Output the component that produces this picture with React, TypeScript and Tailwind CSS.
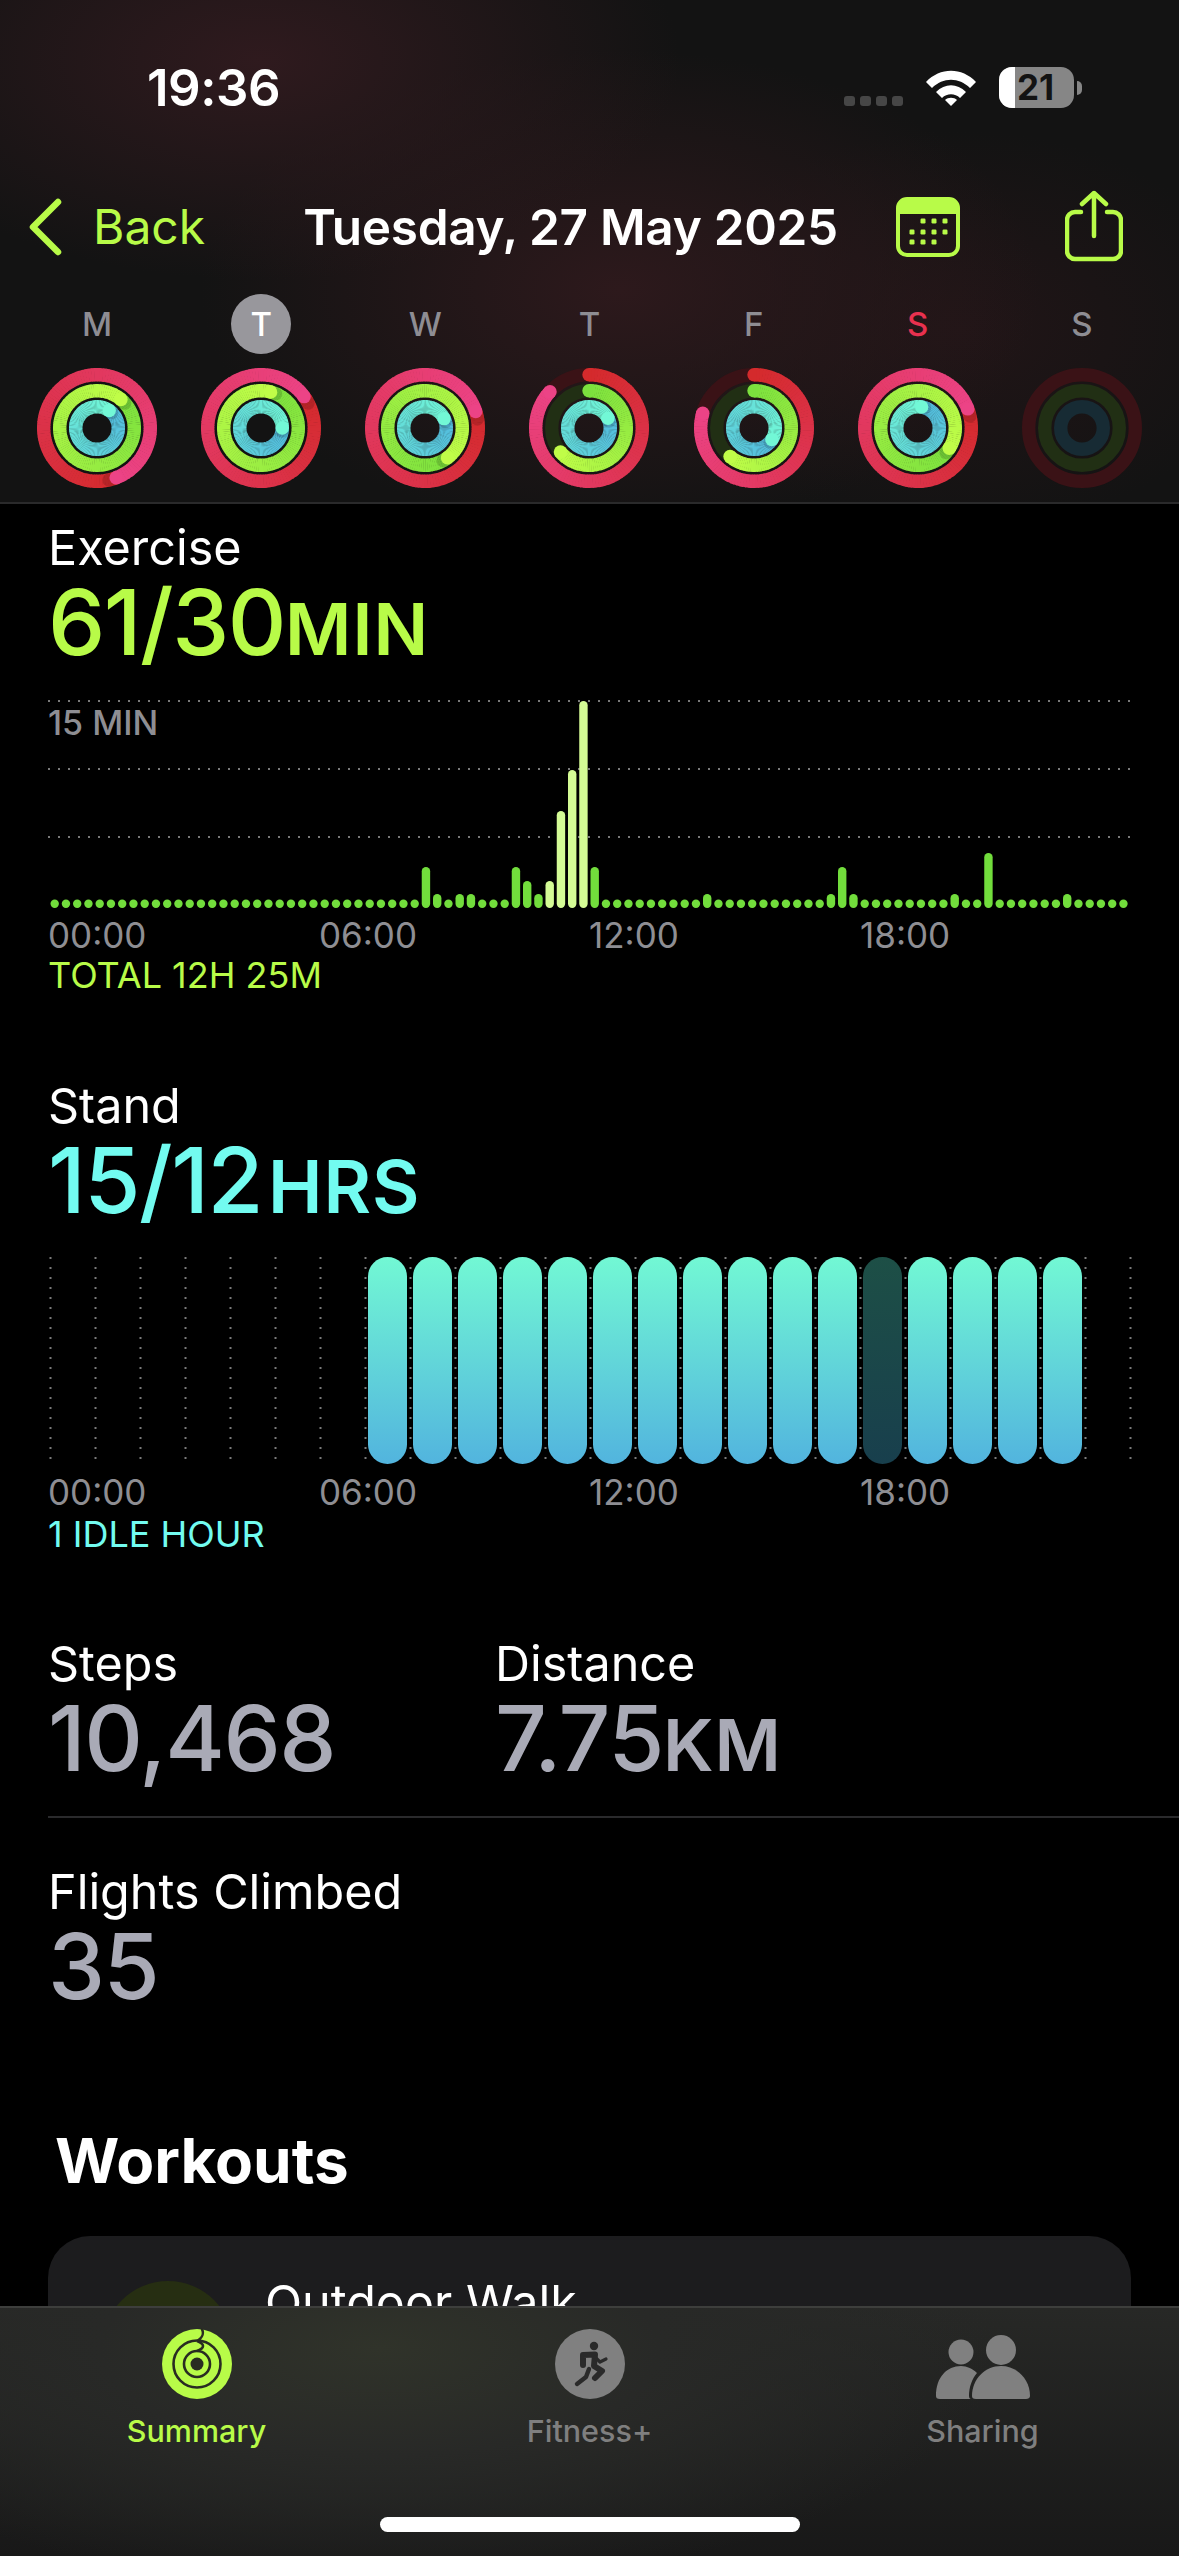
import React from 'react';

type RingSpec = { end: number; full: boolean };
type DayRings = { label: string; labelClass?: string; selected?: boolean; rings: (RingSpec | null)[] };

const RING_STYLES = [
  { r: 53.3, track: '#3a1216', from: [212, 42, 44], to: [236, 67, 134] },
  { r: 37.3, track: '#212f14', from: [124, 225, 62], to: [192, 253, 72] },
  { r: 21.3, track: '#172b34', from: [82, 186, 222], to: [114, 248, 214] },
];

const DAYS: DayRings[] = [
  { label: 'M', rings: [{ end: 159, full: true }, { end: 40, full: true }, { end: 35, full: true }] },
  { label: 'T', selected: true, rings: [{ end: 54, full: true }, { end: 15, full: true }, { end: 90, full: true }] },
  { label: 'W', rings: [{ end: 72, full: true }, { end: 143, full: true }, { end: 64, full: true }] },
  { label: 'T', rings: [{ end: 313, full: false }, { end: 230, full: false }, { end: 63, full: true }] },
  { label: 'F', rings: [{ end: 286, full: false }, { end: 220, full: false }, { end: 123, full: true }] },
  { label: 'S', labelClass: 'text-[#e8314f]', rings: [{ end: 69, full: true }, { end: 123, full: true }, { end: 10, full: true }] },
  { label: 'S', rings: [null, null, null] },
];

// quarter hours with more than the resting dot
const EXERCISE_BARS: Record<number, number> = {
  33: 41, 34: 14, 36: 14, 37: 14, 41: 41, 42: 27, 43: 14, 44: 27, 45: 97, 46: 138, 47: 207, 48: 41,
  58: 14, 69: 14, 70: 41, 71: 14, 80: 14, 83: 55, 90: 14,
};
const EXERCISE_LIGHT = [44, 45, 46, 47];
const STAND_HOURS = Array.from({ length: 16 }, (_, i) => i);
const TIME_LABELS = ['00:00', '06:00', '12:00', '18:00'];

const polar = (r: number, deg: number) => {
  const a = ((deg - 90) * Math.PI) / 180;
  return { x: 60 + r * Math.cos(a), y: 60 + r * Math.sin(a) };
};

const mix = (a: number[], b: number[], t: number) =>
  `rgb(${a.map((v, i) => Math.round(v + (b[i] - v) * t)).join(',')})`;

const Ring: React.FC<{ spec: RingSpec | null; index: number }> = ({ spec, index }) => {
  const s = RING_STYLES[index];
  const width = 13.4;
  if (!spec) return <circle cx="60" cy="60" r={s.r} fill="none" stroke={s.track} strokeWidth={width} />;

  const start = spec.full ? spec.end : 0;
  const sweep = spec.full ? 360 : spec.end;
  const steps = Math.ceil(sweep / 3);
  const segments = Array.from({ length: steps }, (_, i) => {
    const a0 = start + (sweep * i) / steps;
    const a1 = start + (sweep * (i + 1)) / steps + 0.6;
    const p0 = polar(s.r, a0);
    const p1 = polar(s.r, a1);
    return (
      <path
        key={i}
        d={`M ${p0.x} ${p0.y} A ${s.r} ${s.r} 0 0 1 ${p1.x} ${p1.y}`}
        fill="none"
        stroke={mix(s.from, s.to, i / steps)}
        strokeWidth={width}
      />
    );
  });
  const cap = polar(s.r, spec.end);
  const shadow = polar(s.r, spec.end + 8);
  const first = polar(s.r, 0);

  return (
    <g>
      {!spec.full && <circle cx="60" cy="60" r={s.r} fill="none" stroke={s.track} strokeWidth={width} />}
      {!spec.full && <circle cx={first.x} cy={first.y} r={width / 2} fill={mix(s.from, s.to, 0)} />}
      {segments}
      {spec.full && <circle cx={shadow.x} cy={shadow.y} r={width / 2} fill="#000" opacity="0.15" />}
      <circle cx={cap.x} cy={cap.y} r={width / 2} fill={mix(s.from, s.to, 1)} />
    </g>
  );
};

const ActivityRings: React.FC<{ rings: (RingSpec | null)[] }> = ({ rings }) => (
  <svg width="120" height="120" viewBox="0 0 120 120">
    {rings.map((spec, i) => (
      <Ring key={i} spec={spec} index={i} />
    ))}
  </svg>
);

const Metric: React.FC<{ title: string; value: string; unit?: string; unitClass?: string; color: string }> = ({
  title,
  value,
  unit,
  unitClass = 'text-[72px]',
  color,
}) => (
  <div className="py-[4px]">
    <div className="text-[48.5px] leading-[50px] text-white">{title}</div>
    <div className={`mt-[11px] flex items-baseline leading-[76px] ${color}`}>
      <span className="text-[91px] font-medium tracking-[-1.5px]">{value}</span>
      {unit && <span className={`font-semibold tracking-[1px] ${unitClass}`}>{unit}</span>}
    </div>
  </div>
);

const TimeAxis: React.FC = () => (
  <div className="relative h-[38px] text-[35px] leading-[38px] text-[#8e8e93]">
    {TIME_LABELS.map((t, i) => (
      <span key={t} className={['absolute left-0', 'absolute left-[271px]', 'absolute left-[541px]', 'absolute left-[812px]'][i]}>
        {t}
      </span>
    ))}
  </div>
);

const ExerciseChart: React.FC = () => (
  <svg width="1179" height="216" viewBox="0 0 1179 216" className="-ml-[48px] block">
    {[2, 70, 138].map((y) => (
      <line key={y} x1="48" x2="1132" y1={y} y2={y} stroke="#7a7a7a" strokeWidth="2" strokeDasharray="2 8" />
    ))}
    {Array.from({ length: 96 }, (_, i) => {
      const h = EXERCISE_BARS[i] ?? 8.4;
      const light = EXERCISE_LIGHT.includes(i);
      return (
        <rect
          key={i}
          x={54.7 + i * 11.25 - 4.2}
          y={209 - h}
          width="8.4"
          height={h}
          rx="4.2"
          fill={light ? '#d4fb95' : '#72dd3c'}
        />
      );
    })}
  </svg>
);

const StandChart: React.FC = () => (
  <svg width="1179" height="208" viewBox="0 0 1179 208" className="-ml-[48px] block">
    <defs>
      <linearGradient id="standFill" x1="0" y1="0" x2="0" y2="1">
        <stop offset="0%" stopColor="#72f8d4" />
        <stop offset="100%" stopColor="#52b4de" />
      </linearGradient>
      <linearGradient id="standIdle" x1="0" y1="0" x2="0" y2="1">
        <stop offset="0%" stopColor="#1d4f46" />
        <stop offset="100%" stopColor="#183f4d" />
      </linearGradient>
    </defs>
    {Array.from({ length: 25 }, (_, i) => (
      <line key={i} x1={50.5 + i * 45} x2={50.5 + i * 45} y1="0" y2="202" stroke="#7a7a7a" strokeWidth="2" strokeDasharray="2 8" />
    ))}
    {STAND_HOURS.map((i) => (
      <rect
        key={i}
        x={368 + i * 45}
        y="0"
        width="39"
        height="207"
        rx="19.5"
        fill={i === 11 ? 'url(#standIdle)' : 'url(#standFill)'}
      />
    ))}
  </svg>
);

const StatusBar: React.FC = () => (
  <div className="flex h-[115px] items-end pl-[147px] pr-[97px]">
    <span className="text-[51px] font-semibold leading-[54px] tracking-[-0.5px] text-white">19:36</span>
    <div className="ml-auto flex items-end pb-[7px]">
      <div className="mb-[2px] mr-[22px] flex gap-[5px]">
        {[0, 1, 2, 3].map((i) => (
          <div key={i} className="h-[10px] w-[11px] rounded-[3px] bg-[#464646]" />
        ))}
      </div>
      <svg width="52" height="38" viewBox="0 0 52 38" className="mb-[2px] mr-[22px]">
        <path d="M1 14 C15 -1 37 -1 51 14 L45 20 C34 9 18 9 7 20 Z" fill="#fff" />
        <path d="M11 24 C20 15 32 15 41 24 L35 30 C30 25 22 25 17 30 Z" fill="#fff" />
        <path d="M20 32 C23 29 29 29 32 32 L26 38 Z" fill="#fff" />
      </svg>
      <div className="relative flex h-[41px] w-[75px] overflow-hidden rounded-[13px] bg-[#868686]">
        <div className="h-full w-[16px] bg-white" />
        <span className="absolute left-[18px] top-0 text-[35px] font-bold leading-[41px] text-[#131313]">21</span>
      </div>
      <div className="mb-[13px] ml-[3px] h-[14px] w-[5px] rounded-r-full bg-[#868686]" />
    </div>
  </div>
);

const NavBar: React.FC = () => (
  <div className="mt-[76px] flex h-[72px] items-center pl-[28px] text-[#b8fb48]">
    <svg width="34" height="58" viewBox="0 0 34 58" fill="none">
      <path d="M30 4 L5 29 L30 54" stroke="#b8fb48" strokeWidth="6.5" strokeLinecap="round" strokeLinejoin="round" />
    </svg>
    <span className="ml-[31px] text-[48px] leading-[60px]">Back</span>
    <span className="ml-[98px] w-[533px] whitespace-nowrap text-center text-[49.5px] font-semibold leading-[60px] tracking-[-0.3px] text-white">
      Tuesday, 27 May 2025
    </span>
    <svg width="64" height="60" viewBox="0 0 64 60" className="ml-[60px]" fill="none">
      <rect x="2" y="2" width="60" height="56" rx="9" stroke="#b8fb48" strokeWidth="4" />
      <path d="M2 17 V11 A9 9 0 0 1 11 2 H53 A9 9 0 0 1 62 11 V17 Z" fill="#b8fb48" />
      {[
        [27, 24], [38, 24], [49, 24],
        [16, 35], [27, 35], [38, 35], [49, 35],
        [16, 45], [27, 45], [38, 45],
      ].map(([x, y]) => (
        <rect key={`${x}-${y}`} x={x - 2.5} y={y - 2.5} width="5" height="5" rx="1.2" fill="#b8fb48" />
      ))}
    </svg>
    <svg width="58" height="72" viewBox="0 0 58 72" className="ml-[105px] -mt-[2px]" fill="none" stroke="#b8fb48" strokeWidth="4.5" strokeLinecap="round" strokeLinejoin="round">
      <path d="M16 22 H10 A8 8 0 0 0 2 30 V61 A8 8 0 0 0 10 69 H48 A8 8 0 0 0 56 61 V30 A8 8 0 0 0 48 22 H42" />
      <path d="M29 46 V3 M17 14 L29 3 L41 14" />
    </svg>
  </div>
);

const TabBar: React.FC = () => (
  <div className="absolute inset-x-0 bottom-0 h-[250px] border-t-2 border-[#3d3e3c] bg-[radial-gradient(ellipse_620px_240px_at_380px_40px,#30332a_0%,#282927_45%,transparent_100%),linear-gradient(180deg,#272826,#181818)]">
    <div className="grid grid-cols-3 pt-[20px] text-[30.5px] font-medium leading-[38px]">
      <div className="flex flex-col items-center text-[#b8fb48]">
        <svg width="72" height="72" viewBox="0 0 72 72">
          <circle cx="36" cy="36" r="35" fill="#b8fb48" />
          <g fill="none" stroke="#292c22" strokeWidth="2.6">
            <circle cx="36" cy="36" r="23.5" />
            <circle cx="36" cy="36" r="13" />
            <path d="M41 1 C43 6 42 9 37 12.5" strokeLinecap="round" />
            <path d="M36 13 C44 16 44 20 36 23" />
          </g>
          <circle cx="36" cy="36" r="6.5" fill="#292c22" />
        </svg>
        <span className="mt-[12px]">Summary</span>
      </div>
      <div className="flex flex-col items-center text-[#7f7f7f]">
        <svg width="72" height="72" viewBox="0 0 72 72">
          <circle cx="36" cy="36" r="35" fill="#808080" />
          <circle cx="40" cy="18" r="4.2" fill="#2a2a2a" />
          <g fill="none" stroke="#2a2a2a" strokeLinecap="round" strokeLinejoin="round">
            <path d="M29 37 L29 27 L41 26.5 L40 38 L48 43 L41 50" strokeWidth="6" />
            <path d="M41 29 L46 34 L52 31" strokeWidth="3.2" />
            <path d="M35 41 L32 49 L23 56" strokeWidth="4.4" />
          </g>
        </svg>
        <span className="mt-[12px]">Fitness+</span>
      </div>
      <div className="flex flex-col items-center text-[#7f7f7f]">
        <svg width="94" height="72" viewBox="0 0 94 72" fill="#808080">
          <circle cx="25" cy="24" r="12.5" />
          <circle cx="65" cy="22" r="15" />
          <path d="M0 68 C0 49 11 38 25 38 C31 38 37 41 41 45 C36 51 33 59 33 68 C33 70 34 71 35 71 H4 C1 71 0 70 0 68 Z" />
          <path d="M36 68 C36 51 49 38 65 38 C81 38 94 51 94 68 C94 70 92 71 90 71 H40 C37 71 36 70 36 68 Z" />
        </svg>
        <span className="mt-[12px]">Sharing</span>
      </div>
    </div>
    <div className="absolute bottom-[24px] left-[380px] h-[15px] w-[420px] rounded-full bg-white" />
  </div>
);

export default function App() {
  return (
    <div className="relative h-[2556px] w-[1179px] overflow-hidden bg-black [font-family:Inter,sans-serif]">
      {/* header with the reddish glow */}
      <header className="h-[504px] border-b-2 border-[#2a2a2b] bg-[#131313] bg-[radial-gradient(ellipse_420px_220px_at_260px_60px,#2f1a1e_0%,transparent_100%),radial-gradient(ellipse_420px_240px_at_620px_290px,#2d191c_0%,transparent_100%),radial-gradient(ellipse_300px_200px_at_960px_330px,#211517_0%,transparent_100%)]">
        <StatusBar />
        <NavBar />
        <div className="mt-[31px] grid grid-cols-7 px-[15px]">
          {DAYS.map((d, i) => (
            <div key={i} className="flex flex-col items-center">
              <div
                className={`flex h-[60px] w-[60px] items-center justify-center rounded-full text-[33px] font-medium leading-none ${
                  d.selected ? 'bg-[#98979c] text-white' : d.labelClass ?? 'text-[#8e8d93]'
                }`}
              >
                {d.label}
              </div>
              <div className="mt-[14px]">
                <ActivityRings rings={d.rings} />
              </div>
            </div>
          ))}
        </div>
      </header>

      <main className="px-[48px]">
        <div className="mt-[15px]">
          <Metric title="Exercise" value="61/30" unit="MIN" color="text-[#b8fb48]" />
        </div>
        <div className="relative mt-[28px]">
          <ExerciseChart />
          <span className="absolute left-0 top-[5px] text-[34px] font-medium leading-[38px] text-[#8e8e93]">15 MIN</span>
        </div>
        <div className="mt-[1px]">
          <TimeAxis />
        </div>
        <div className="mt-[1px] text-[36px] leading-[40px] text-[#b8fb48]">TOTAL 12H 25M</div>

        <div className="mt-[82px]">
          <Metric title="Stand" value="15/12" unit="HRS" unitClass="ml-[6px] text-[73px]" color="text-[#72fbf0]" />
        </div>
        <div className="mt-[28px]">
          <StandChart />
        </div>
        <div className="mt-[8px]">
          <TimeAxis />
        </div>
        <div className="mt-[3px] text-[36px] leading-[40px] text-[#72fbf0]">1 IDLE HOUR</div>

        <div className="mt-[81px] flex">
          <div className="w-[447px]">
            <Metric title="Steps" value="10,468" color="text-[#a9aab6]" />
          </div>
          <Metric title="Distance" value="7.75" unit="KM" color="text-[#a9aab6]" />
        </div>
        <div className="-mr-[48px] mt-[29px] h-[2px] bg-[#2a2a2c]" />
        <div className="mt-[45px]">
          <Metric title="Flights Climbed" value="35" color="text-[#a9aab6]" />
        </div>
        <h2 className="ml-[7px] mt-[116px] text-[62px] font-bold leading-[74px] text-white">Workouts</h2>
        <div className="mt-[38px] flex h-[260px] items-start rounded-t-[42px] bg-[#1c1c1e] pl-[55px] pt-[45px]">
          <div className="h-[130px] w-[130px] rounded-full bg-[#262e12]" />
          <span className="-mt-[8px] ml-[32px] text-[48.5px] leading-[60px] text-white">Outdoor Walk</span>
        </div>
      </main>

      <TabBar />
    </div>
  );
}
